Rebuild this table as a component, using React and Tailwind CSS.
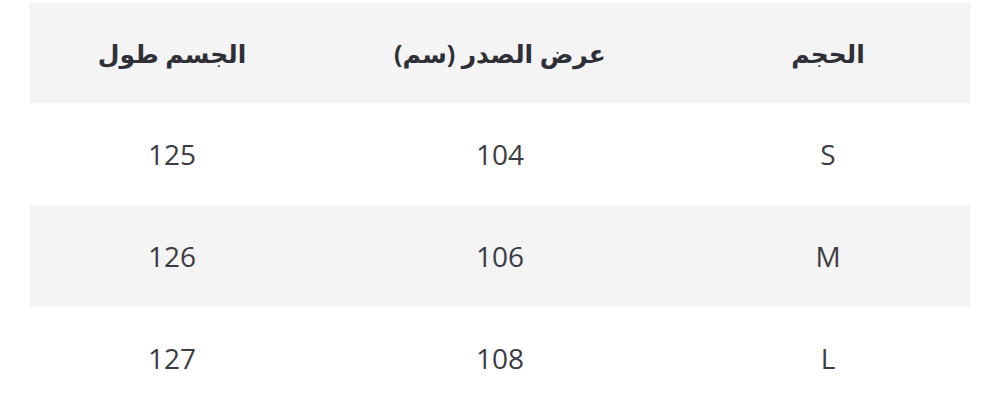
const rows = [
  { size: 'S', chest: '104', length: '125' },
  { size: 'M', chest: '106', length: '126' },
  { size: 'L', chest: '108', length: '127' },
]

export default function App() {
  return (
    <div className="w-[1000px] h-[417px] bg-white pt-[3px] px-[30px] font-['Open_Sans','DejaVu_Sans',sans-serif]">
      <div dir="rtl" className="w-[940px]">
        <div className="grid grid-cols-[284px_1fr_284px] h-[100px] items-center bg-[#f4f4f5] text-[25px] font-bold text-[#2f2f37]">
          <div className="text-center pt-[2px]">الحجم</div>
          <div className="text-center pt-[2px]">عرض الصدر (سم)</div>
          <div className="text-center pt-[2px]">الجسم طول</div>
        </div>
        {rows.map((r, i) => (
          <div
            key={r.size}
            className={`grid grid-cols-[284px_1fr_284px] h-[102px] items-center text-[28px] text-[#3c3c44] ${i % 2 === 1 ? 'bg-[#f4f4f5]' : 'bg-white'}`}
          >
            <div className="text-center">{r.size}</div>
            <div className="text-center">{r.chest}</div>
            <div className="text-center">{r.length}</div>
          </div>
        ))}
      </div>
    </div>
  )
}
